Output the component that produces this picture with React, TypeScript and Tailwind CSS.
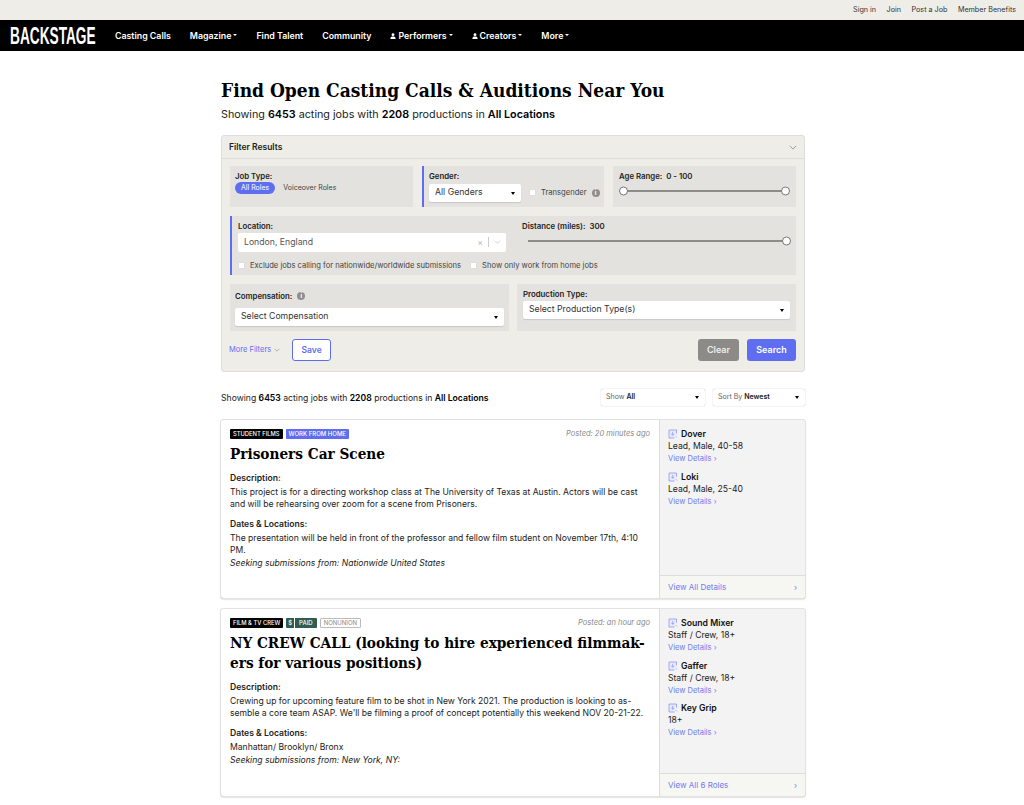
import type { ReactNode } from 'react';

const SANS = "font-['Inter','Liberation_Sans',sans-serif]";

function Caret({ className = '' }: { className?: string }) {
  return <span className={`inline-block h-0 w-0 border-x-[2.500px] border-t-[3px] border-x-transparent border-t-black ${className}`} />;
}

function Chevron({ className = '' }: { className?: string }) {
  return (
    <svg viewBox="0 0 10 6" className={className} fill="none" stroke="currentColor" strokeWidth="1">
      <path d="M1 1l4 4 4-4" />
    </svg>
  );
}

function Person() {
  return (
    <svg viewBox="0 0 8 8" className="mr-[2px] h-[6px] w-[6px]" fill="currentColor">
      <circle cx="4" cy="2.2" r="1.9" />
      <path d="M0.5 8c0-2.6 1.4-3.4 3.5-3.4S7.500 5.400 7.500 8z" />
    </svg>
  );
}

function InfoDot() {
  return (
    <span className="flex h-[8px] w-[8px] items-center justify-center rounded-full bg-[#8f8f8b] text-[6px] leading-none font-bold text-white">i</span>
  );
}

function RoleIcon() {
  return (
    <svg viewBox="0 0 10 10" className="h-[10px] w-[10px] text-[#8f98f5]" fill="none" stroke="currentColor" strokeWidth="0.8">
      <path d="M8.500 4.500V1H1v8h5.500" fill="#e8eafc" />
      <path d="M4.700 2.800v3.400M3.200 4.800l1.500 1.500 1.500-1.500" />
      <path d="M7.800 7.200l1.200 1.200" />
    </svg>
  );
}

function NavItem({ label, caret, person }: { label: string; caret?: boolean; person?: boolean }) {
  return (
    <a className="flex items-center text-[8.800px] font-semibold text-white">
      {person && <Person />}
      {label}
      {caret && <span className="mb-[1px] ml-[2px] inline-block h-0 w-0 border-x-[2px] border-t-[2px] border-x-transparent border-t-white" />}
    </a>
  );
}

function FieldBox({ children, accent, className = '' }: { children: ReactNode; accent?: boolean; className?: string }) {
  return (
    <div className={`bg-[#e3e2de] ${accent ? 'border-l-2 border-[#5f6df0]' : ''} ${className}`}>{children}</div>
  );
}

function Label({ children }: { children: ReactNode }) {
  return <div className="text-[7.800px] leading-[10px] font-semibold text-[#222]">{children}</div>;
}

function SelectBox({ label, className = '' }: { label: string; className?: string }) {
  return (
    <div className={`flex h-[18px] items-center justify-between rounded-[2px] bg-white px-[6px] text-[8.700px] text-[#333] shadow-[0_1px_1px_rgba(0,0,0,0.12)] ${className}`}>
      <span>{label}</span>
      <Caret />
    </div>
  );
}

function Check({ label, extra }: { label: string; extra?: ReactNode }) {
  return (
    <div className="flex items-center gap-[5px] text-[7.600px] whitespace-nowrap text-[#444]">
      <span className="h-[7px] w-[7px] rounded-[1px] border border-[#ddd] bg-white" />
      {label}
      {extra}
    </div>
  );
}

function Thumb({ className }: { className: string }) {
  return <span className={`absolute top-1/2 h-[9px] w-[9px] -translate-y-1/2 rounded-full border border-[#777] bg-white ${className}`} />;
}

function Stats({ className }: { className: string }) {
  return (
    <p className={className}>
      Showing <b className="font-semibold text-black">6453</b> acting jobs with <b className="font-semibold text-black">2208</b> productions in <b className="font-semibold text-black">All Locations</b>
    </p>
  );
}

function SmallSelect({ prefix, value, className }: { prefix: string; value: string; className: string }) {
  return (
    <div className={`flex h-[17px] items-center justify-between rounded-[2px] bg-white pr-[6px] pl-[5px] text-[7px] text-[#666] shadow-[0_0_1px_rgba(0,0,0,0.45)] ${className}`}>
      <span>
        {prefix} <b className="font-semibold text-[#222]">{value}</b>
      </span>
      <Caret />
    </div>
  );
}

type Role = { name: string; info: string };

type Job = {
  tags: ReactNode;
  posted: string;
  title: ReactNode;
  description: ReactNode;
  dates: ReactNode;
  seeking: string;
  roles: Role[];
  footer: string;
  height: string;
};

const blackTag = 'rounded-[1px] bg-black px-[3px] text-[5.800px] leading-[10px] font-medium text-white';

const jobs: Job[] = [
  {
    tags: (
      <>
        <span className={blackTag}>STUDENT FILMS</span>
        <span className="rounded-[1px] bg-[#5f6df0] px-[3px] text-[6px] leading-[10px] font-medium text-white">WORK FROM HOME</span>
      </>
    ),
    posted: 'Posted: 20 minutes ago',
    title: 'Prisoners Car Scene',
    description: (
      <>
        This project is for a directing workshop class at The University of Texas at Austin. Actors will be cast
        <br />
        and will be rehearsing over zoom for a scene from Prisoners.
      </>
    ),
    dates: (
      <>
        The presentation will be held in front of the professor and fellow film student on November 17th, 4:10
        <br />
        PM.
      </>
    ),
    seeking: 'Seeking submissions from: Nationwide United States',
    roles: [
      { name: 'Dover', info: 'Lead, Male, 40-58' },
      { name: 'Loki', info: 'Lead, Male, 25-40' },
    ],
    footer: 'View All Details',
    height: 'h-[178px]',
  },
  {
    tags: (
      <>
        <span className={blackTag}>FILM &amp; TV CREW</span>
        <span className="flex gap-px text-[6px] leading-[10px] font-medium text-white">
          <span className="rounded-l-[1px] bg-[#2f5d50] px-[2px]">$</span>
          <span className="rounded-r-[1px] bg-[#2f5d50] px-[4px]">PAID</span>
        </span>
        <span className="rounded-[1px] border border-[#bbb] px-[3px] text-[6px] leading-[8px] text-[#888]">NONUNION</span>
      </>
    ),
    posted: 'Posted: an hour ago',
    title: (
      <>
        NY CREW CALL (looking to hire experienced filmmak-
        <br />
        ers for various positions)
      </>
    ),
    description: (
      <>
        Crewing up for upcoming feature film to be shot in New York 2021. The production is looking to as-
        <br />
        semble a core team ASAP. We'll be filming a proof of concept potentially this weekend NOV 20-21-22.
      </>
    ),
    dates: 'Manhattan/ Brooklyn/ Bronx',
    seeking: 'Seeking submissions from: New York, NY:',
    roles: [
      { name: 'Sound Mixer', info: 'Staff / Crew, 18+' },
      { name: 'Gaffer', info: 'Staff / Crew, 18+' },
      { name: 'Key Grip', info: '18+' },
    ],
    footer: 'View All 6 Roles',
    height: 'h-[187px]',
  },
];

function JobCard({ job }: { job: Job }) {
  return (
    <article className={`flex ${job.height} rounded-[2px] bg-white shadow-[0_1px_2px_rgba(0,0,0,0.35)] outline outline-[#e2e2e2]`}>
      <div className="w-[439px] border-r border-[#ddd] px-[9px] pt-[8px]">
        <div className="flex items-center justify-between">
          <div className="flex items-center gap-[3px]">{job.tags}</div>
          <span className="text-[7.500px] text-[#888] italic">{job.posted}</span>
        </div>
        <h2 className="mt-[5px] font-['DejaVu_Serif_Condensed','DejaVu_Serif',serif] text-[15.200px] leading-[20px] font-bold whitespace-nowrap text-black">{job.title}</h2>
        <div className="mt-[8px] text-[8.600px] leading-[12px] text-[#222]">
          <div className="font-semibold">Description:</div>
          <p className="mt-[2px]">{job.description}</p>
          <div className="mt-[8px] font-semibold">Dates &amp; Locations:</div>
          <p className="mt-[2px]">{job.dates}</p>
          <p className="mt-px italic">{job.seeking}</p>
        </div>
      </div>
      <div className="flex flex-1 flex-col bg-[#f3f3f3]">
        <div className="flex flex-1 flex-col gap-[6.500px] px-[8px] pt-[8px]">
          {job.roles.map((role) => (
            <div key={role.name}>
              <div className="flex items-center gap-[3px] text-[8.700px] leading-[12px] font-semibold text-[#111]">
                <RoleIcon />
                {role.name}
              </div>
              <div className="text-[8.600px] leading-[13px] text-[#222]">{role.info}</div>
              <div className="text-[7.500px] leading-[11px] text-[#6f7cf0]">View Details ›</div>
            </div>
          ))}
        </div>
        <div className="flex h-[23px] items-center justify-between border-t border-[#ddd] bg-[#f6f6f3] px-[8px] text-[8px] text-[#6f7cf0]">
          <span>{job.footer}</span>
          <span>›</span>
        </div>
      </div>
    </article>
  );
}

export default function App() {
  return (
    <div className={`min-h-[805px] bg-white ${SANS}`}>
      <div className="flex h-[20px] items-center justify-end gap-[10.500px] bg-[#eeede8] pr-[8px] text-[7.200px] text-[#333]">
        <a>Sign in</a>
        <a>Join</a>
        <a>Post a Job</a>
        <a>Member Benefits</a>
      </div>
      <nav className="flex h-[31px] items-center gap-[19px] bg-black">
        <div className="ml-[10px] w-[86px] origin-left scale-x-[0.57] font-['Liberation_Sans',sans-serif] text-[24px] leading-none font-bold whitespace-nowrap text-white">BACKSTAGE</div>
        <NavItem label="Casting Calls" />
        <NavItem label="Magazine" caret />
        <NavItem label="Find Talent" />
        <NavItem label="Community" />
        <NavItem label="Performers" caret person />
        <NavItem label="Creators" caret person />
        <NavItem label="More" caret />
      </nav>

      <main className="mx-auto w-[584px] translate-x-[1px] pt-[27px]">
        <h1 className="font-['DejaVu_Serif_Condensed','DejaVu_Serif',serif] text-[19px] leading-[24px] font-bold text-black">Find Open Casting Calls &amp; Auditions Near You</h1>
        <Stats className="mt-[6px] text-[10.770px] leading-[14px] text-[#222]" />

        <section className="mt-[13px] h-[237px] rounded-[3px] border border-[#ddd] bg-[#eeede8]">
          <div className="flex h-[23px] items-center justify-between border-b border-[#ddd] px-[7px] text-[8.500px] font-semibold text-[#222]">
            Filter Results
            <Chevron className="h-[5px] w-[8px] text-[#888]" />
          </div>
          <div className="flex flex-col gap-[9px] px-[8px] pt-[7px]">
            <div className="flex gap-[9px]">
              <FieldBox className="h-[41px] w-[183px] px-[5px] pt-[5px]">
                <Label>Job Type:</Label>
                <div className="mt-px flex items-center gap-[8px] text-[7px]">
                  <span className="rounded-full bg-[#5f6df0] px-[6px] py-[1px] leading-[10px] text-white">All Roles</span>
                  <span className="text-[#444]">Voiceover Roles</span>
                </div>
              </FieldBox>
              <FieldBox accent className="h-[41px] w-[182px] pt-[5px] pl-[5px]">
                <Label>Gender:</Label>
                <div className="mt-[3px] flex items-center gap-[8px]">
                  <SelectBox label="All Genders" className="w-[92px]" />
                  <Check label="Transgender" extra={<InfoDot />} />
                </div>
              </FieldBox>
              <FieldBox className="h-[41px] w-[183px] px-[6px] pt-[5px]">
                <Label>Age Range:&nbsp; 0 - 100</Label>
                <div className="relative mx-[4px] mt-[9px] h-[2px] bg-[#8c8c88]">
                  <Thumb className="-left-[4px]" />
                  <Thumb className="-right-[4px]" />
                </div>
              </FieldBox>
            </div>

            <FieldBox accent className="flex h-[59px] pt-[5px] pl-[6px]">
              <div className="w-[284px]">
                <Label>Location:</Label>
                <div className="mt-[2px] flex h-[19px] w-[268px] items-center justify-between rounded-[2px] bg-white pr-[5px] pl-[6px] text-[8.700px] text-[#555]">
                  London, England
                  <span className="flex items-center gap-[5px] text-[#bbb]">
                    ×
                    <span className="h-[10px] w-px bg-[#ccc]" />
                    <Chevron className="h-[4px] w-[7px]" />
                  </span>
                </div>
                <div className="mt-[8px] flex w-[360px] gap-[9px]">
                  <Check label="Exclude jobs calling for nationwide/worldwide submissions" />
                  <Check label="Show only work from home jobs" />
                </div>
              </div>
              <div className="flex-1 pr-[6px]">
                <Label>Distance (miles):&nbsp; 300</Label>
                <div className="relative mt-[9px] ml-[6px] h-[2px] bg-[#8c8c88]">
                  <Thumb className="-right-[1px]" />
                </div>
              </div>
            </FieldBox>

            <div className="flex gap-[8px]">
              <FieldBox className="h-[47px] w-[279px] px-[5px] pt-[7px]">
                <div className="flex items-center gap-[5px]">
                  <Label>Compensation:</Label>
                  <InfoDot />
                </div>
                <SelectBox label="Select Compensation" className="mt-[7px]" />
              </FieldBox>
              <FieldBox className="h-[47px] w-[279px] px-[6px] pt-[5px]">
                <Label>Production Type:</Label>
                <SelectBox label="Select Production Type(s)" className="mt-[2px]" />
              </FieldBox>
            </div>

            <div className="-mt-[1px] flex h-[22px] items-center">
              <span className="-ml-px flex items-center gap-[3px] text-[7.500px] text-[#5f6df0]">
                More Filters
                <Chevron className="h-[4px] w-[6px] text-[#888]" />
              </span>
              <button className="ml-[12px] h-[22px] w-[39px] rounded-[3px] border border-[#5f6df0] bg-white text-[8.500px] font-semibold text-[#5f6df0]">Save</button>
              <div className="ml-auto flex gap-[8px]">
                <button className="h-[22px] w-[41px] rounded-[3px] bg-[#8c8b87] text-[9px] font-semibold text-[#eeede8]">Clear</button>
                <button className="h-[22px] w-[49px] rounded-[3px] bg-[#5f6df0] text-[9px] font-semibold text-white">Search</button>
              </div>
            </div>
          </div>
        </section>

        <div className="mt-[17px] flex items-center">
          <Stats className="mt-[2px] text-[8.650px] text-[#222]" />
          <SmallSelect prefix="Show" value="All" className="ml-auto w-[104px]" />
          <SmallSelect prefix="Sort By" value="Newest" className="ml-[8px] w-[92px]" />
        </div>

        <div className="mt-[14px] flex flex-col gap-[11px]">
          {jobs.map((job, i) => (
            <JobCard key={i} job={job} />
          ))}
        </div>
      </main>
    </div>
  );
}
